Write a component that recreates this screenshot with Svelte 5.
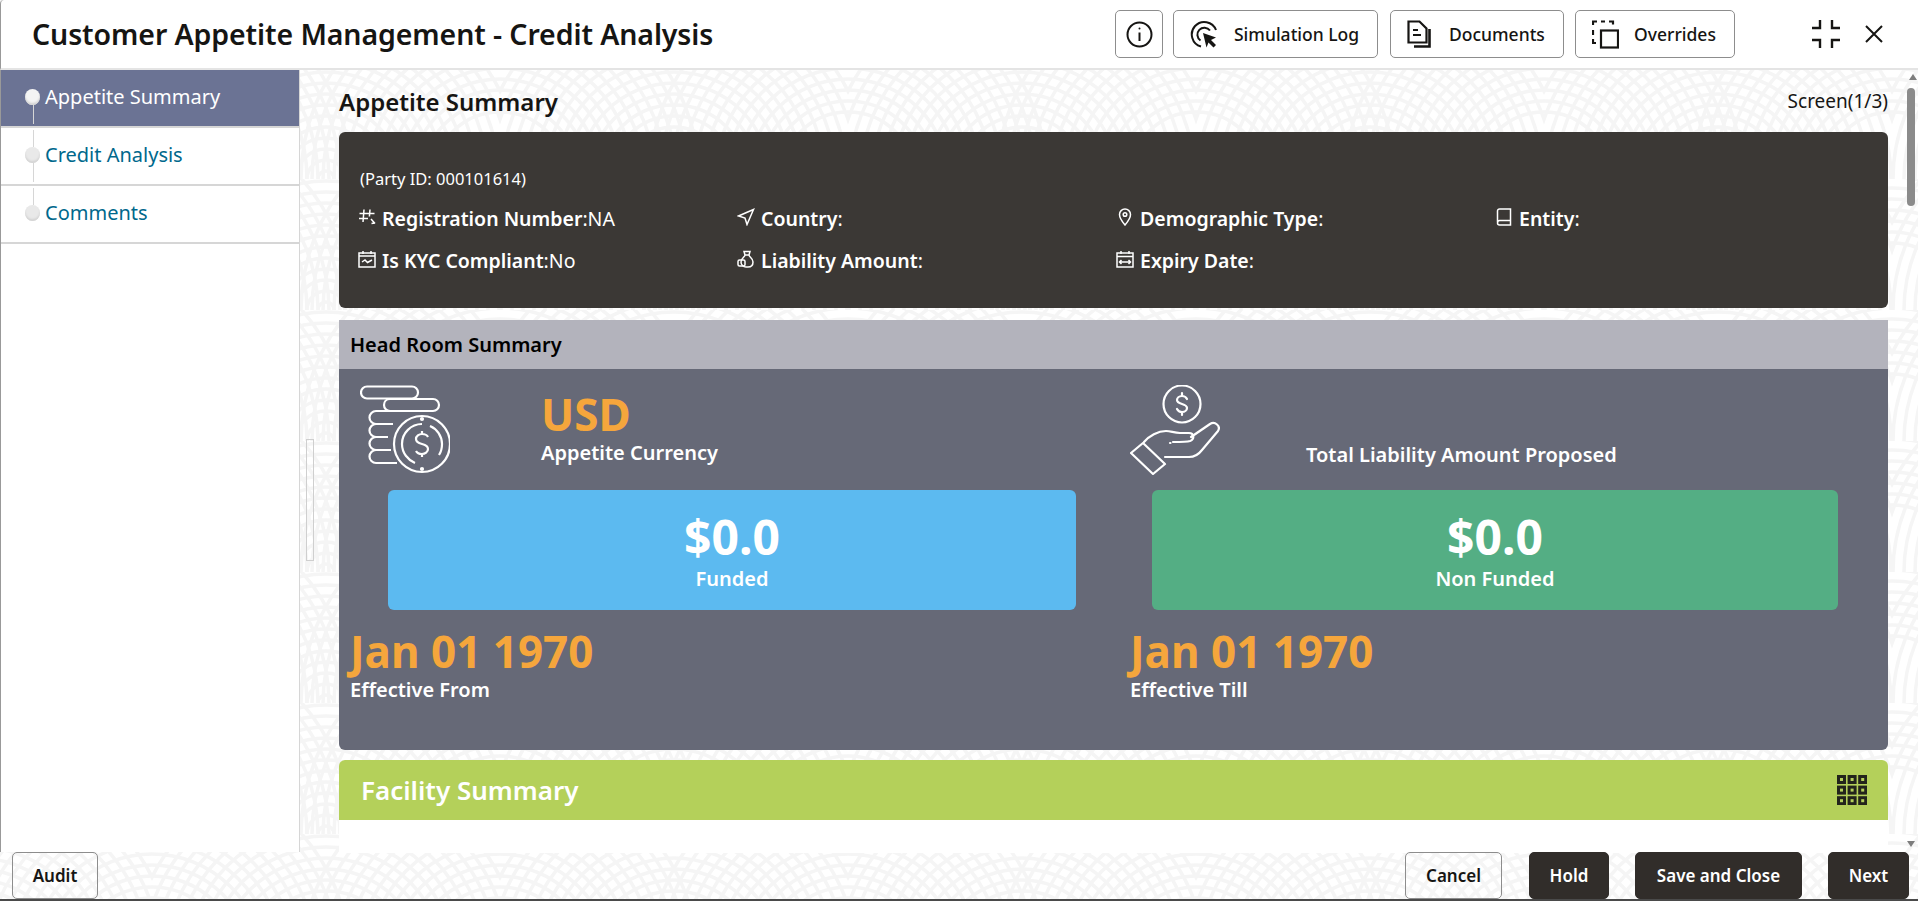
<script>
  const steps = [];
  const stepNames = ['Appetite Summary', 'Credit Analysis', 'Comments'];
  for (let i = 0; i < stepNames.length; i++) steps.push({ name: stepNames[i], active: i === 0 });

  // fingerprint rings for the page background
  const rings = [];
  for (let r = 8; r < 200; r += 11) rings.push(r);
</script>

<div class="app">
  <svg class="texture" width="1918" height="901" aria-hidden="true">
    <defs>
      <pattern id="print" width="348" height="131" patternUnits="userSpaceOnUse" y="-83" x="-196">
        {#each rings as r}
          <circle cx="174" cy="131" {r} />
          {#if r > 60}
            <circle cx="348" cy="131" r={r + 4} />
            <circle cx="0" cy="131" r={r + 4} />
          {/if}
        {/each}
      </pattern>
    </defs>
    <rect width="1918" height="901" fill="url(#print)" />
  </svg>

  <header class="top">
    <h1>Customer Appetite Management - Credit Analysis</h1>
    <div class="tools">
      <button class="tool info" aria-label="Info">
        <svg width="27" height="27" viewBox="0 0 27 27" fill="none" stroke="#161513" stroke-width="2">
          <circle cx="13.5" cy="13.5" r="12" />
          <path d="M13.5 11.5v8.5" />
          <circle cx="13.5" cy="7.5" r="1" fill="#161513" stroke="none" />
        </svg>
      </button>
      <button class="tool sim">
        <svg width="29" height="29" viewBox="0 0 29 29" fill="none" stroke="#161513" stroke-width="2">
          <path d="M11 26.5A12.5 12.5 0 1 1 26 10" />
          <path d="M10.5 20.5A7 7 0 1 1 20 10.5" />
          <path d="M13 13l13 4.5-5 2.5 5 5-2.5 2.5-5-5-2 5z" fill="#161513" stroke="none" />
        </svg>
        Simulation Log
      </button>
      <button class="tool docs">
        <svg width="27" height="29" viewBox="0 0 27 29" fill="none" stroke="#161513" stroke-width="2.2">
          <path d="M1.5 1.5h11l7 7v14h-18z" />
          <path d="M6 10h5M6 15h8" />
          <path d="M22.5 9v17.5H7" stroke-width="2.6" />
        </svg>
        Documents
      </button>
      <button class="tool over">
        <svg width="27" height="29" viewBox="0 0 27 29" fill="none" stroke="#161513" stroke-width="2.2">
          <rect x="9" y="10.5" width="17" height="17" />
          <path d="M1 5V1.5h4M9 1.5h4M17 1.5h4v3M1 10v5M1 19v4h3" />
        </svg>
        Overrides
      </button>
      <div class="win">
        <svg width="30" height="30" viewBox="0 0 30 30" fill="none" stroke="#161513" stroke-width="2.4" aria-label="Restore">
          <path d="M9 1v8H1M21 1v8h8M9 29v-8H1M21 29v-8h8" />
        </svg>
        <svg width="18" height="18" viewBox="0 0 18 18" fill="none" stroke="#161513" stroke-width="2" aria-label="Close">
          <path d="M1 1l16 16M17 1L1 17" />
        </svg>
      </div>
    </div>
  </header>

  <div class="middle">
    <nav class="side">
      {#each steps as step}
        <div class="step" class:active={step.active}>
          <span class="dot"></span>
          {step.name}
        </div>
      {/each}
    </nav>

    <span class="handle"></span>

    <main class="content">
      <div class="title-row">
        <h2>Appetite Summary</h2>
        <span>Screen(1/3)</span>
      </div>

      <section class="party">
        <p class="party-id">(Party ID: 000101614)</p>
        <div class="facts">
          <div class="fact">
            <svg viewBox="0 0 18 18" class="ic"><path d="M6 1.5L5 14M12 1.5l-.6 7M1.5 5.5h15M1 10.5h9M13 11l4 4.5M13.5 15.5l3-.5" /></svg>
            <b>Registration Number</b>:NA
          </div>
          <div class="fact">
            <svg viewBox="0 0 18 18" class="ic"><path d="M16.5 1.5L1.5 8l6.5 2 2 6.5z" /></svg>
            <b>Country</b>:
          </div>
          <div class="fact">
            <svg viewBox="0 0 18 18" class="ic"><path d="M9 17S3.5 10.5 3.5 6.5a5.5 5.5 0 0 1 11 0C14.500 10.500 9 17 9 17z" /><circle cx="9" cy="6.500" r="1.800" /></svg>
            <b>Demographic Type</b>:
          </div>
          <div class="fact">
            <svg viewBox="0 0 18 18" class="ic"><path d="M2.500 14V3a2 2 0 0 1 2-2h11v16h-11a2 2 0 0 1-2-2c0-1.500 1-2.500 2-2.500h11" /></svg>
            <b>Entity</b>:
          </div>
          <div class="fact">
            <svg viewBox="0 0 18 18" class="ic"><rect x="1" y="3" width="16" height="14" /><path d="M5 1v3M13 1v3M1 6h16M4 12l3-2 2.500 2.500L14 10" /></svg>
            <b>Is KYC Compliant</b>:No
          </div>
          <div class="fact">
            <svg viewBox="0 0 18 18" class="ic"><path d="M7 1.500h6L12 5H8zM8 5c0 2-4 3-4 7a5 5 0 0 0 5 5h2c4 0 5-3 5-5 0-4-4-5-4-7" /><rect x="1" y="10" width="7" height="6" rx="1.500" /></svg>
            <b>Liability Amount</b>:
          </div>
          <div class="fact">
            <svg viewBox="0 0 18 18" class="ic"><rect x="1" y="3" width="16" height="14" /><path d="M5 1v3M13 1v3M1 6.500h16M3.500 12h11M5.500 10l-2 2 2 2M12.500 10l2 2-2 2" /></svg>
            <b>Expiry Date</b>:
          </div>
        </div>
      </section>

      <section class="headroom">
        <h3>Head Room Summary</h3>
        <div class="cols">
          <div class="col left">
            <div class="summary">
              <svg class="big" width="90" height="90" viewBox="0 0 90 90" fill="none" stroke="#fff" stroke-width="2.200">
                <rect x="1" y="1.500" width="57" height="12" rx="6" />
                <path d="M30 14h43a6 6 0 0 1 0 12H30a6 6 0 0 1-6-6c0-3 2-6 6-6z" />
                <path d="M34 26H16a6.500 6.500 0 0 0 0 13h17M28 39H16a6.500 6.500 0 0 0 0 13h12M27 52H16a6.500 6.500 0 0 0 0 13h12M31 65H16a6.500 6.500 0 0 0 0 13h21" />
                <circle cx="62" cy="59" r="28" />
                <path d="M62 39a20 20 0 0 0-20 20c0 9 6 16 13 19" />
                <path d="M70 41c7 3 12 10 12 18 0 4-1 8-3 11" />
                <path d="M68 52c-1-2-3-3-6-3-3 0-6 2-6 5 0 7 12 3 12 10 0 3-3 5-6 5-3 0-5-1-6-3M62 46v3M62 69v3" />
                <circle cx="62" cy="34" r="1" fill="#fff" />
                <circle cx="62" cy="84" r="1" fill="#fff" />
              </svg>
              <div class="text">
                <strong class="amber">USD</strong>
                <span>Appetite Currency</span>
              </div>
            </div>
            <div class="box blue">
              <strong>$0.0</strong>
              <span>Funded</span>
            </div>
            <div class="date">
              <strong class="amber">Jan 01 1970</strong>
              <span>Effective From</span>
            </div>
          </div>

          <div class="col right">
            <div class="summary">
              <svg class="big" width="90" height="90" viewBox="0 0 90 90" fill="none" stroke="#fff" stroke-width="2.200" stroke-linejoin="round" stroke-linecap="round">
                <circle cx="52" cy="19" r="18.500" />
                <path d="M57 14c-1-2-3-3-5-3-3 0-5 2-5 4 0 5 10 3 10 8 0 2-2 4-5 4-2 0-4-1-5-3M52 8v3M52 27v3" />
                <path d="M1 68l12-10 22 21-12 10z" />
                <path d="M14 57c5-6 14-11 22-11 5 0 8 2 14 2h9c5 0 6 6 1 8-3 1-12 1-17 1" />
                <path d="M61 52l19-13c5-3 11 2 8 7L72 65c-3 4-8 7-13 7H35" />
                <path d="M40 58h.500" />
              </svg>
              <div class="text">
                <span>Total Liability Amount Proposed</span>
              </div>
            </div>
            <div class="box green">
              <strong>$0.0</strong>
              <span>Non Funded</span>
            </div>
            <div class="date">
              <strong class="amber">Jan 01 1970</strong>
              <span>Effective Till</span>
            </div>
          </div>
        </div>
      </section>

      <section class="facility">
        <div class="facility-head">
          <h3>Facility Summary</h3>
          <svg width="30" height="30" viewBox="0 0 30 30" aria-label="Grid">
            {#each [0, 1, 2] as row}
              {#each [0, 1, 2] as col}
                <rect x={col * 10.600 + 1.500} y={row * 10.600 + 1.500} width="6" height="6" fill="none" stroke="#23241c" stroke-width="3" />
              {/each}
            {/each}
          </svg>
        </div>
      </section>
    </main>

    <div class="scroll">
      <span class="up"></span>
      <span class="thumb"></span>
    </div>
  </div>

  <footer class="bottom">
    <button class="btn">Audit</button>
    <div class="actions">
      <button class="btn cancel">Cancel</button>
      <button class="btn dark hold">Hold</button>
      <button class="btn dark save">Save and Close</button>
      <button class="btn dark next">Next</button>
    </div>
    <span class="down"></span>
  </footer>
</div>

<style>
  :global(body) {
    margin: 0;
    background: #fff;
  }
  .app {
    position: relative;
    width: 1918px;
    height: 901px;
    display: flex;
    flex-direction: column;
    overflow: hidden;
    font-family: "Noto Sans", "Open Sans", sans-serif;
    color: #161513;
    box-sizing: border-box;
    border-bottom: 2px solid #4a4a4a;
  }
  .texture {
    position: absolute;
    left: 0;
    top: 0;
  }
  .texture circle {
    fill: none;
    stroke: #f5f5f5;
    stroke-width: 3.5;
  }

  .top {
    position: relative;
    height: 68px;
    flex: none;
    display: flex;
    align-items: center;
    justify-content: space-between;
    background: #fff;
    border-bottom: 2px solid #e4e4e4;
    border-left: 1px solid #999;
    border-top-left-radius: 4px;
    padding-left: 31px;
    box-sizing: content-box;
  }
  h1 {
    margin: 0 0 0;
    font-size: 28.500px;
    font-weight: 600;
    letter-spacing: -0.1px;
  }
  .tools {
    display: flex;
    align-items: center;
    height: 48px;
    margin-right: 35px;
  }
  .tool {
    height: 48px;
    display: flex;
    align-items: center;
    background: #fff;
    border: 1px solid #8d8d8d;
    border-radius: 5px;
    font: 500 17.500px "Noto Sans", sans-serif;
    color: #161513;
    padding: 0;
    box-sizing: border-box;
  }
  .info {
    width: 48px;
    justify-content: center;
    margin-right: 10px;
  }
  .sim {
    width: 205px;
    padding-left: 16px;
    gap: 15px;
    margin-right: 12px;
  }
  .docs {
    width: 174px;
    padding-left: 16px;
    gap: 15px;
    margin-right: 11px;
  }
  .over {
    width: 160px;
    padding-left: 16px;
    gap: 15px;
  }
  .win {
    display: flex;
    align-items: center;
    gap: 24px;
    margin-left: 76px;
  }

  .middle {
    position: relative;
    flex: 1;
    min-height: 0;
    display: flex;
  }
  .side {
    width: 300px;
    flex: none;
    background: #fff;
    border-right: 1px solid #d6d6d6;
    border-left: 1px solid #999;
    box-sizing: border-box;
  }
  .step {
    position: relative;
    height: 58px;
    box-sizing: border-box;
    padding: 0 0 4px 44px;
    display: flex;
    align-items: center;
    border-bottom: 2px solid #d6d6d6;
    font-size: 20px;
    color: #00688c;
  }
  .step.active {
    background: #6b7394;
    color: #fff;
  }
  .dot {
    position: absolute;
    left: 24px;
    top: 19px;
    width: 15px;
    height: 16px;
    border-radius: 50%;
    background: #e9e9e9;
    box-shadow: inset 0 -2px 2px #d4d4d4;
  }
  .active .dot {
    background: #f4f4f4;
  }
  .step::after {
    content: "";
    position: absolute;
    left: 32px;
    top: 35px;
    height: 19px;
    border-left: 1px solid #d6d6d6;
  }
  .step:last-child::after {
    display: none;
  }
  .step + .step::before {
    content: "";
    position: absolute;
    left: 32px;
    top: 2px;
    height: 17px;
    border-left: 1px solid #d6d6d6;
  }
  .handle {
    width: 6px;
    height: 120px;
    margin: 369px 25px 0 6px;
    flex: none;
    border: 1px solid #cfcfcf;
    position: relative;
  }
  .handle {
    box-sizing: content-box;
  }

  .content {
    position: relative;
    width: 1549px;
    flex: none;
    min-height: 0;
  }
  .title-row {
    height: 62px;
    display: flex;
    justify-content: space-between;
    align-items: center;
  }
  h2 {
    margin: 0;
    font-size: 24px;
    font-weight: 600;
  }
  .title-row span {
    font-size: 19px;
  }
  .party {
    height: 176px;
    box-sizing: border-box;
    background: #3b3835;
    border-radius: 6px;
    color: #fff;
    padding: 35px 14px 0 19px;
  }
  .party-id {
    margin: 0 0 0 2px;
    font-size: 16.500px;
    line-height: 24px;
  }
  .facts {
    display: grid;
    grid-template-columns: repeat(4, 379px);
    grid-auto-rows: 42px;
    margin-top: 7px;
    font-size: 19.500px;
  }
  .fact {
    display: flex;
    align-items: center;
    white-space: pre;
    line-height: 1;
  }
  .fact b {
    font-weight: 600;
  }
  .ic {
    width: 18px;
    height: 18px;
    margin: -5px 6px 0 0;
    fill: none;
    stroke: #fff;
    stroke-width: 1.500;
    flex: none;
  }

  .headroom {
    margin-top: 12px;
    height: 430px;
    background: #666977;
    border-radius: 0 0 6px 6px;
    color: #fff;
  }
  .headroom h3 {
    margin: 0;
    height: 49px;
    line-height: 49px;
    padding-left: 11px;
    background: #b3b3bc;
    color: #000;
    font-size: 20px;
    font-weight: 600;
  }
  .cols {
    display: grid;
    grid-template-columns: 774px 775px;
  }
  .summary {
    height: 121px;
    position: relative;
  }
  .big {
    position: absolute;
    top: 16px;
  }
  .left .big {
    left: 21px;
  }
  .right .big {
    left: 17px;
  }
  .text {
    position: absolute;
    display: flex;
    flex-direction: column;
    top: 20px;
    font-size: 20px;
    font-weight: 600;
  }
  .left .text {
    left: 202px;
  }
  .right .text {
    left: 193px;
    top: 72px;
  }
  .amber {
    color: #f5a63c;
    font-size: 44px;
    font-weight: 700;
    line-height: 50px;
  }
  .text span {
    line-height: 28px;
  }
  .box {
    height: 120px;
    border-radius: 6px;
    display: flex;
    flex-direction: column;
    align-items: center;
    justify-content: center;
    font-size: 20px;
    font-weight: 600;
  }
  .box strong {
    font-size: 48px;
    font-weight: 700;
    line-height: 56px;
    margin-top: 2px;
  }
  .box span {
    line-height: 28px;
  }
  .blue {
    background: #5cbaf0;
    margin: 0 37px 0 49px;
  }
  .green {
    background: #54ae84;
    margin: 0 50px 0 39px;
  }
  .date {
    display: flex;
    flex-direction: column;
    margin-top: 16px;
    font-size: 20px;
    font-weight: 600;
  }
  .left .date {
    margin-left: 11px;
  }
  .right .date {
    margin-left: 17px;
  }
  .date span {
    line-height: 28px;
  }

  .facility {
    margin-top: 10px;
    height: 93px;
    background: #fff;
    border-radius: 6px 6px 0 0;
  }
  .facility-head {
    height: 60px;
    background: #b4d05a;
    border-radius: 6px 6px 0 0;
    display: flex;
    align-items: center;
    justify-content: space-between;
    padding: 0 21px 0 22px;
  }
  .facility-head h3 {
    margin: 0;
    color: #fff;
    font-size: 26px;
    font-weight: 600;
  }

  .scroll {
    position: relative;
    flex: 1;
  }
  .up {
    position: absolute;
    left: 21px;
    top: 4px;
    border: 4px solid transparent;
    border-top: 0;
    border-bottom: 6px solid #7d7d7d;
  }
  .thumb {
    position: absolute;
    left: 19px;
    top: 18px;
    width: 8px;
    height: 118px;
    border-radius: 4px;
    background: #8b8b8b;
  }

  .bottom {
    position: relative;
    flex: none;
    height: 47px;
    display: flex;
    justify-content: space-between;
    padding: 0 9px 0 12px;
  }
  .btn {
    height: 47px;
    width: 86px;
    padding: 0;
    box-sizing: border-box;
    border: 1px solid #8d8d8d;
    border-radius: 5px;
    background: transparent;
    font: 600 17px "Noto Sans", sans-serif;
    color: #161513;
  }
  .actions {
    display: flex;
  }
  .cancel {
    width: 97px;
    margin-right: 27px;
  }
  .dark {
    background: #312d2a;
    border-color: #312d2a;
    color: #fff;
  }
  .hold {
    width: 80px;
    margin-right: 26px;
  }
  .save {
    width: 167px;
    margin-right: 26px;
  }
  .next {
    width: 81px;
  }
  .down {
    position: absolute;
    left: 1907px;
    top: -11px;
    border: 4px solid transparent;
    border-bottom: 0;
    border-top: 6px solid #7d7d7d;
  }
</style>
